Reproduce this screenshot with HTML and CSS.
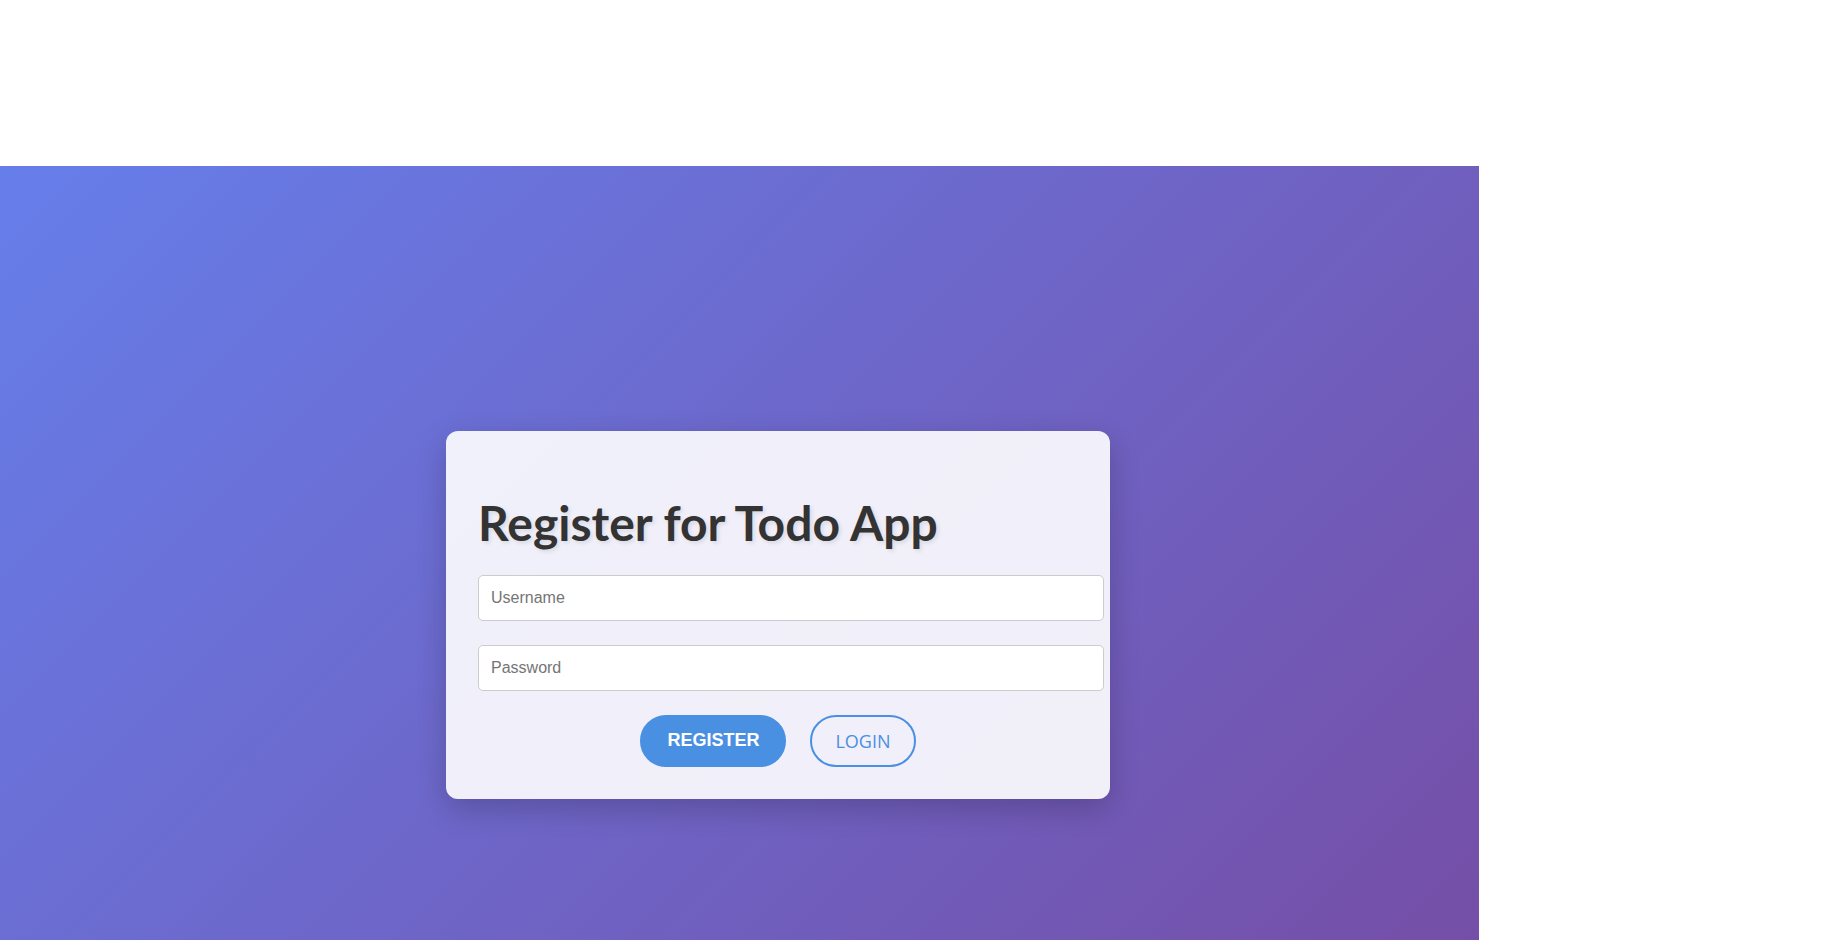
FILE: index.html
```html
<!DOCTYPE html>
<html lang="en">
<head>
<meta charset="utf-8">
<title>Register for Todo App</title>
<link rel="stylesheet" href="styles.css">
</head>
<body>
<div class="top-space"></div>
<main class="bg">
  <section class="card">
    <h1 class="title">Register for Todo App</h1>
    <form class="form">
      <input class="field" type="text" placeholder="Username">
      <input class="field" type="password" placeholder="Password">
      <div class="actions">
        <button type="button" class="btn btn-primary">REGISTER</button>
        <button type="button" class="btn btn-outline">LOGIN</button>
      </div>
    </form>
  </section>
</main>
</body>
</html>
```

FILE: styles.css
```css
html, body {
  margin: 0;
  padding: 0;
  background: #ffffff;
}

.top-space {
  height: 166px;
}

.bg {
  width: 1479px;
  height: 940px;
  box-sizing: border-box;
  padding: 265px 0 0 446px;
  background: linear-gradient(135deg, #667eea 0%, #764ba2 100%);
}

.card {
  width: 600px;
  padding: 32px;
  background: rgba(255, 255, 255, 0.9);
  border-radius: 12px;
  box-shadow: 0 10px 30px rgba(0, 0, 0, 0.2);
}

.title {
  margin: 31px 0 23px;
  font-family: Lato, "Open Sans", sans-serif;
  font-weight: 700;
  font-size: 48px;
  line-height: 1.2;
  color: #333333;
  text-shadow: 2px 2px 4px rgba(0, 0, 0, 0.1);
}

.form {
  display: flex;
  flex-direction: column;
  gap: 24px;
  margin: 0;
}

.field {
  box-sizing: content-box;
  width: 100%;
  height: 20px;
  padding: 12px;
  margin: 0;
  border: 1px solid #cccccc;
  border-radius: 5px;
  background: #ffffff;
  font-family: "Liberation Sans", Arial, sans-serif;
  font-size: 16px;
  color: #333333;
  outline: none;
}

.field::placeholder {
  color: #757575;
}

.actions {
  display: flex;
  justify-content: center;
  gap: 24px;
}

.btn {
  height: 52px;
  border: 2px solid #4a90e2;
  border-radius: 26px;
  font-size: 18px;
  cursor: pointer;
}

.btn-primary {
  padding: 0 25px;
  background: #4a90e2;
  color: #ffffff;
  font-family: "Liberation Sans", Arial, sans-serif;
  font-weight: 700;
}

.btn-outline {
  padding: 0 23px;
  background: transparent;
  color: #4a90e2;
  font-family: "Open Sans", sans-serif;
  font-weight: 500;
}
```
